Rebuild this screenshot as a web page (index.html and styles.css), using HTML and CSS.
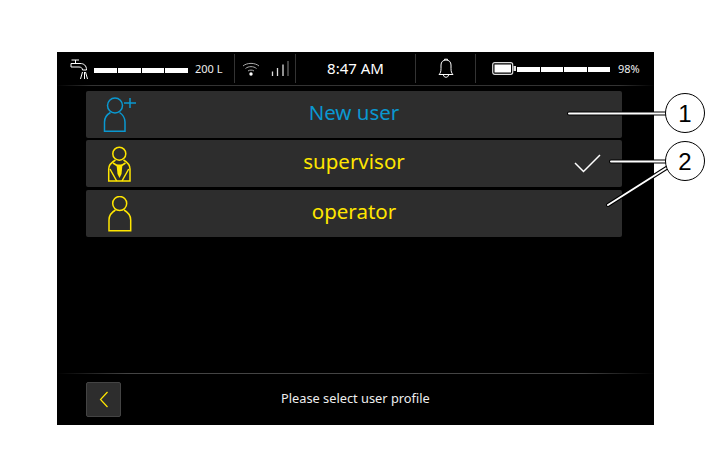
FILE: index.html
```html
<!DOCTYPE html>
<html lang="en">

<head>
	<meta charset="UTF-8">
	<title>User profile</title>
	<link rel="stylesheet" href="styles.css">
</head>

<body>
	<div class="screen">
		<div class="status-bar">
			<div class="status-cell water">
				<svg class="tap-icon" width="18" height="22" viewBox="0 0 18 22" fill="none" stroke="#fff" stroke-width="1">
					<path d="M1.500 2H9M5.500 2V5" />
					<path d="M1 5.500H10C14 5.500 16.500 7.500 16.500 12H12.500C12.500 10 11 9 9 9H1Z" />
					<path d="M12.500 14L10.500 21M14.500 14V21M15.500 14L17.500 21" />
				</svg>
				<div class="level-bar">
					<span></span><span></span><span></span><span></span>
				</div>
				<span class="small-text">200 L</span>
			</div>
			<div class="status-cell signal">
				<svg width="18" height="16" viewBox="0 0 18 16" fill="none" stroke="#aaa" stroke-width="1">
					<path d="M1 5C5 1.500 13 1.500 17 5M3.500 7.500C6.500 5 11.500 5 14.500 7.500M6 10C7.500 8.800 10.500 8.800 12 10" />
					<circle cx="9" cy="13" r="1.700" fill="#fff" stroke="none" />
				</svg>
				<svg width="19" height="16" viewBox="0 0 19 16" fill="none" stroke-width="1.300">
					<path d="M1.500 10.500V15M6.500 7V15M12 3.500V15" stroke="#ddd" />
					<path d="M17 0V15" stroke="#666" />
				</svg>
			</div>
			<div class="status-cell clock">8:47 AM</div>
			<div class="status-cell bell">
				<svg width="16" height="21" viewBox="0 0 16 21" fill="none" stroke="#fff" stroke-width="1">
					<path d="M1 16.500C2.500 15 3 13.500 3 10.500V7C3 4 5 2 8 2S13 4 13 7V10.500C13 13.500 13.500 15 15 16.500Z" />
					<path d="M6.500 2V1.200H9.500V2M5.500 17C5.500 20 10.500 20 10.500 17" />
				</svg>
			</div>
			<div class="status-cell power">
				<svg width="24" height="13" viewBox="0 0 24 13">
					<rect x=".7" y=".7" width="20" height="11.600" rx="2" fill="none" stroke="#ddd" stroke-width="1.200" />
					<rect x="2.500" y="2.500" width="16.500" height="8" fill="#fff" />
					<rect x="21.500" y="4" width="2.500" height="5" fill="#ddd" />
				</svg>
				<div class="level-bar">
					<span></span><span></span><span></span><span></span>
				</div>
				<span class="small-text">98%</span>
			</div>
		</div>

		<div class="user-list">
			<div class="user-row new">
				<svg class="user-icon" width="36" height="36" viewBox="0 0 36 36" fill="none" stroke="#0a98d0" stroke-width="1.500">
					<circle cx="12" cy="8.500" r="7.500" />
					<path d="M7.500 15.500C4 17.500 1.500 21 1.500 25V34.200H22V25C22 21 19.500 17.500 16.500 15.500" />
					<path d="M21 6H33M27 1V11" />
				</svg>
				<span class="user-name">New user</span>
			</div>
			<div class="user-row">
				<svg class="user-icon" width="36" height="36" viewBox="0 0 36 36" fill="none" stroke="#ffe600" stroke-width="1.500">
					<circle cx="16.300" cy="7.700" r="6.500" />
					<path d="M12.500 14C9 16 5.700 19 5.700 23V35H27V23C27 19 24 16 20.500 14" />
					<path d="M7 23L13.700 35M25.700 23L19 35M10 17L16.300 21L22.500 17" />
					<path d="M13.500 18.500H19.500L18.500 28L16.500 32L14.500 28Z" fill="#ffe600" stroke="none" />
				</svg>
				<span class="user-name">supervisor</span>
				<svg class="check" width="27" height="19" viewBox="0 0 27 19" fill="none" stroke="#fff" stroke-width="1.500">
					<path d="M1 9L9.500 17.500L26 1" />
				</svg>
			</div>
			<div class="user-row">
				<svg class="user-icon" width="36" height="36" viewBox="0 0 36 36" fill="none" stroke="#ffe600" stroke-width="1.500">
					<circle cx="16.700" cy="7.500" r="7" />
					<path d="M12.500 14C9 16 6 19.500 6 24V34.700H27.700V24C27.700 19.500 24.500 16 21 14" />
				</svg>
				<span class="user-name">operator</span>
			</div>
		</div>

		<div class="bottom-bar">
			<div class="back-btn">
				<svg width="10" height="17" viewBox="0 0 10 17" fill="none" stroke="#ffe600" stroke-width="1.200">
					<path d="M8.500 1L1.500 8.500L8.500 16" />
				</svg>
			</div>
			<span class="hint">Please select user profile</span>
		</div>
	</div>

	<!-- callouts drawn over the screenshot -->
	<svg class="callouts" width="709" height="473" viewBox="0 0 709 473" fill="none">
		<g stroke="#000" stroke-width="4" stroke-linecap="round">
			<path d="M569 113.500H667M611 161.500H667M608 205L668 167" />
		</g>
		<g stroke="#fff" stroke-width="2" stroke-linecap="round">
			<path d="M569 113.500H667M611 161.500H667M608 205L668 167" />
		</g>
		<circle cx="685" cy="113" r="19.500" fill="#fff" stroke="#000" stroke-width="1" />
		<circle cx="685" cy="161" r="19.500" fill="#fff" stroke="#000" stroke-width="1" />
		<text x="685" y="122" class="callout-num">1</text>
		<text x="685" y="170" class="callout-num">2</text>
	</svg>
</body>

</html>
```

FILE: styles.css
```css
/* Base reset */
* {
	margin: 0;
	padding: 0;
	box-sizing: border-box;
	font-family: 'Noto Sans', 'Open Sans', sans-serif;
}

body {
	position: relative;
	width: 709px;
	height: 473px;
	padding: 52px 0 0 57px;
	background: #fff;
	overflow: hidden;
}

.screen {
	display: flex;
	flex-direction: column;
	width: 597px;
	height: 373px;
	background: #000;
	color: #fff;
}

.status-bar {
	display: grid;
	grid-template-columns: 178px 61px 120px 60px 178px;
	height: 34px;
	padding-top: 2px;
	border-bottom: 1px solid;
	border-image: linear-gradient(90deg, transparent, #333 6%, #333 94%, transparent) 1;
}

.status-cell {
	display: flex;
	align-items: center;
	height: 29px;
	border-right: 1px solid #333;
}

.status-cell:last-child {
	border-right: none;
}

.water {
	padding-left: 13px;
}

.tap-icon {
	margin-right: 6px;
}

.level-bar {
	display: flex;
	gap: 1px;
	width: 94px;
	height: 5px;
	margin-top: 3px;
}

.level-bar span {
	flex: 1;
	background: #fff;
}

.small-text {
	font-size: 11px;
	margin-left: 7px;
	margin-bottom: 1px;
	color: #eee;
}

.power .small-text {
	margin-left: 8px;
}

.signal {
	gap: 11px;
	padding-left: 7px;
}

.clock {
	justify-content: center;
	font-size: 15px;
	padding-bottom: 1px;
}

.bell {
	justify-content: center;
}

.power {
	padding-left: 16px;
}

.power .level-bar {
	width: 93px;
	margin-left: 1px;
	margin-top: 2px;
}

.user-list {
	display: flex;
	flex-direction: column;
	gap: 2px;
	padding: 5px 32px 0 29px;
}

.user-row {
	position: relative;
	display: flex;
	align-items: center;
	justify-content: center;
	height: 47px;
	padding-bottom: 5px;
	background: #2d2d2d;
	border-radius: 2px;
}

.user-row:last-child {
	margin-top: 1px;
}

.user-icon {
	position: absolute;
	left: 17px;
	top: 6px;
}

.user-name {
	font-size: 20.500px;
	color: #ffe600;
}

.new .user-name {
	color: #0a98d0;
}

.check {
	position: absolute;
	right: 21px;
	top: 14px;
}

.bottom-bar {
	display: flex;
	align-items: center;
	margin-top: auto;
	height: 52px;
	padding-left: 29px;
	border-top: 1px solid;
	border-image: linear-gradient(90deg, transparent, #444 12%, #444 88%, transparent) 1;
}

.back-btn {
	display: flex;
	align-items: center;
	justify-content: center;
	width: 35px;
	height: 35px;
	background: #2d2d2d;
	border: 1px solid #444;
	border-radius: 2px;
}

.hint {
	margin-left: 160px;
	margin-bottom: 3px;
	font-size: 12.800px;
	color: #eee;
}

.callouts {
	position: absolute;
	left: 0;
	top: 0;
}

.callout-num {
	font-family: 'Liberation Sans', Arial, sans-serif;
	font-size: 24px;
	fill: #000;
	text-anchor: middle;
}
```
